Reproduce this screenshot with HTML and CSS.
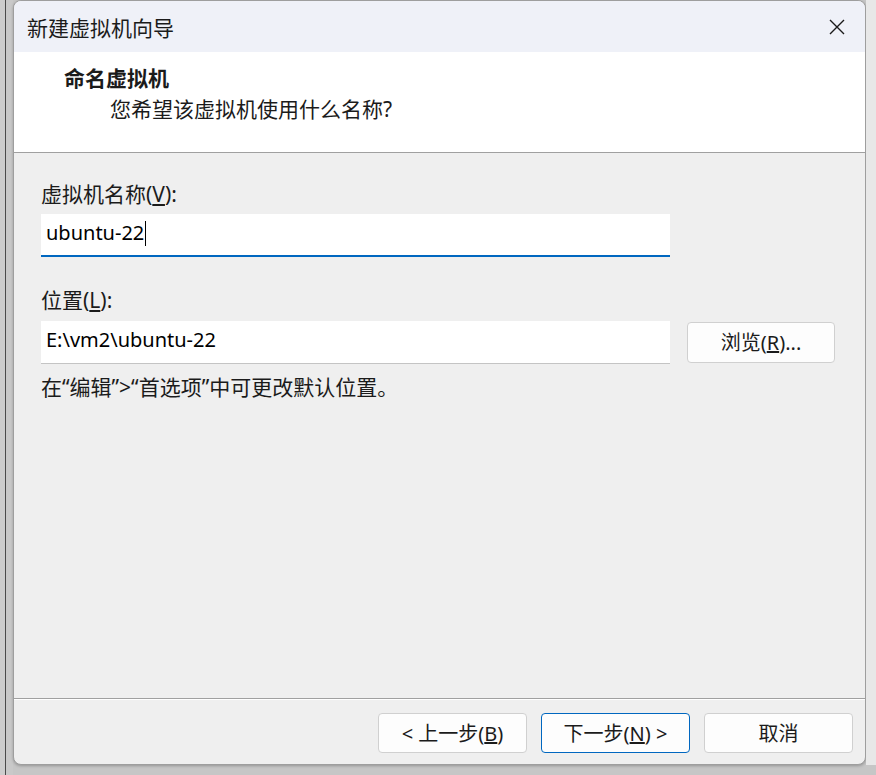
FILE: index.html
```html
<!DOCTYPE html>
<html lang="zh-CN">
<head>
    <meta charset="UTF-8">
    <meta name="viewport" content="width=device-width, initial-scale=1.0">
    <title>新建虚拟机向导</title>
    <link rel="stylesheet" href="styles.css">
</head>
<body>
    <div class="desktop">
        <div class="edge-left"></div>
        <div class="window">
            <div class="titlebar">
                <span class="title">新建虚拟机向导</span>
                <button class="close" aria-label="关闭">
                    <svg width="16" height="16" viewBox="0 0 16 16">
                        <path d="M1 1 L15 15 M15 1 L1 15" stroke="#1a1a1a" stroke-width="1.4" fill="none"/>
                    </svg>
                </button>
            </div>
            <div class="header">
                <div class="header-title">命名虚拟机</div>
                <div class="header-sub">您希望该虚拟机使用什么名称?</div>
            </div>
            <div class="content">
                <div class="label">虚拟机名称(<u>V</u>):</div>
                <div class="input focused">ubuntu-22<span class="caret"></span></div>
                <div class="label second">位置(<u>L</u>):</div>
                <div class="row">
                    <div class="input">E:\vm2\ubuntu-22</div>
                    <button class="button browse">浏览(<u>R</u>)...</button>
                </div>
                <div class="note">在“编辑”&gt;“首选项”中可更改默认位置。</div>
            </div>
            <div class="footer">
                <button class="button">&lt; 上一步(<u>B</u>)</button>
                <button class="button primary">下一步(<u>N</u>) &gt;</button>
                <button class="button">取消</button>
            </div>
        </div>
        <div class="edge-right"></div>
    </div>
</body>
</html>
```

FILE: styles.css
```css
body {
    margin: 0;
    background-color: #c6c6c6;
    font-family: "Noto Sans", "Noto Sans CJK SC", sans-serif;
    color: #1b1b1b;
    overflow: hidden;
}
.desktop {
    display: flex;
    height: 775px;
}
.edge-left {
    width: 13px;
    background: linear-gradient(to right, #cdcdcd 5px, #4b4b4b 5px, #4b4b4b 6px, #c9c9c9 6px);
}
.edge-right {
    flex: 1;
    height: 765px;
    background-color: #e8e8e8;
}
.window {
    width: 851px;
    height: 763px;
    display: flex;
    flex-direction: column;
    border: 1px solid #9e9e9e;
    border-radius: 8px;
    overflow: hidden;
    background-color: #efefef;
    box-shadow: 0 1px 3px rgba(0, 0, 0, 0.25);
}
.titlebar {
    height: 51px;
    display: flex;
    align-items: center;
    justify-content: space-between;
    padding: 0 20px 0 13px;
    background-color: #eff1f8;
}
.title {
    font-size: 21px;
}
.close {
    width: 16px;
    height: 16px;
    padding: 0;
    border: none;
    background: none;
    display: flex;
    margin-top: 1px;
}
.header {
    height: 100px;
    background-color: #ffffff;
    border-bottom: 1px solid #a0a0a0;
    font-size: 21px;
}
.header-title {
    font-weight: bold;
    padding: 12px 0 0 50px;
    line-height: 28px;
}
.header-sub {
    padding-left: 96px;
    line-height: 28px;
    margin-top: 3px;
}
.content {
    flex: 1;
    padding: 27px 27px 0;
}
.label {
    font-size: 21px;
    line-height: 28px;
    margin-bottom: 6px;
}
.label.second {
    margin-top: 29px;
    margin-bottom: 7px;
}
.input {
    box-sizing: border-box;
    width: 629px;
    height: 43px;
    padding: 0 5px 6px;
    display: flex;
    align-items: center;
    background-color: #ffffff;
    border-bottom: 1px solid #c4c4c4;
    font-family: "Noto Sans", sans-serif;
    font-size: 20px;
    color: #000;
}
.input.focused {
    border-bottom: 2px solid #0067c0;
    padding-bottom: 5px;
}
.caret {
    display: inline-block;
    width: 1px;
    height: 25px;
    margin-left: 1px;
    margin-top: 2px;
    background-color: #000;
}
.row {
    display: flex;
    align-items: center;
    gap: 17px;
}
.note {
    font-size: 21px;
    line-height: 28px;
    margin-top: 9px;
}
.button {
    box-sizing: border-box;
    width: 149px;
    height: 40px;
    background-color: #fdfdfd;
    border: 1px solid #d0d0d0;
    border-radius: 4px;
    font-family: "Noto Sans", "Noto Sans CJK SC", sans-serif;
    font-size: 20px;
    color: #1b1b1b;
    padding: 0 0 2px;
}
.button.browse {
    height: 41px;
    width: 148px;
}
.button.primary {
    border-color: #0067c0;
}
.footer {
    height: 66px;
    box-sizing: border-box;
    border-top: 1px solid #a0a0a0;
    box-shadow: inset 0 1px 0 #ffffff;
    display: flex;
    justify-content: flex-end;
    align-items: flex-start;
    gap: 14px;
    padding: 14px 12px 0 0;
}
```
